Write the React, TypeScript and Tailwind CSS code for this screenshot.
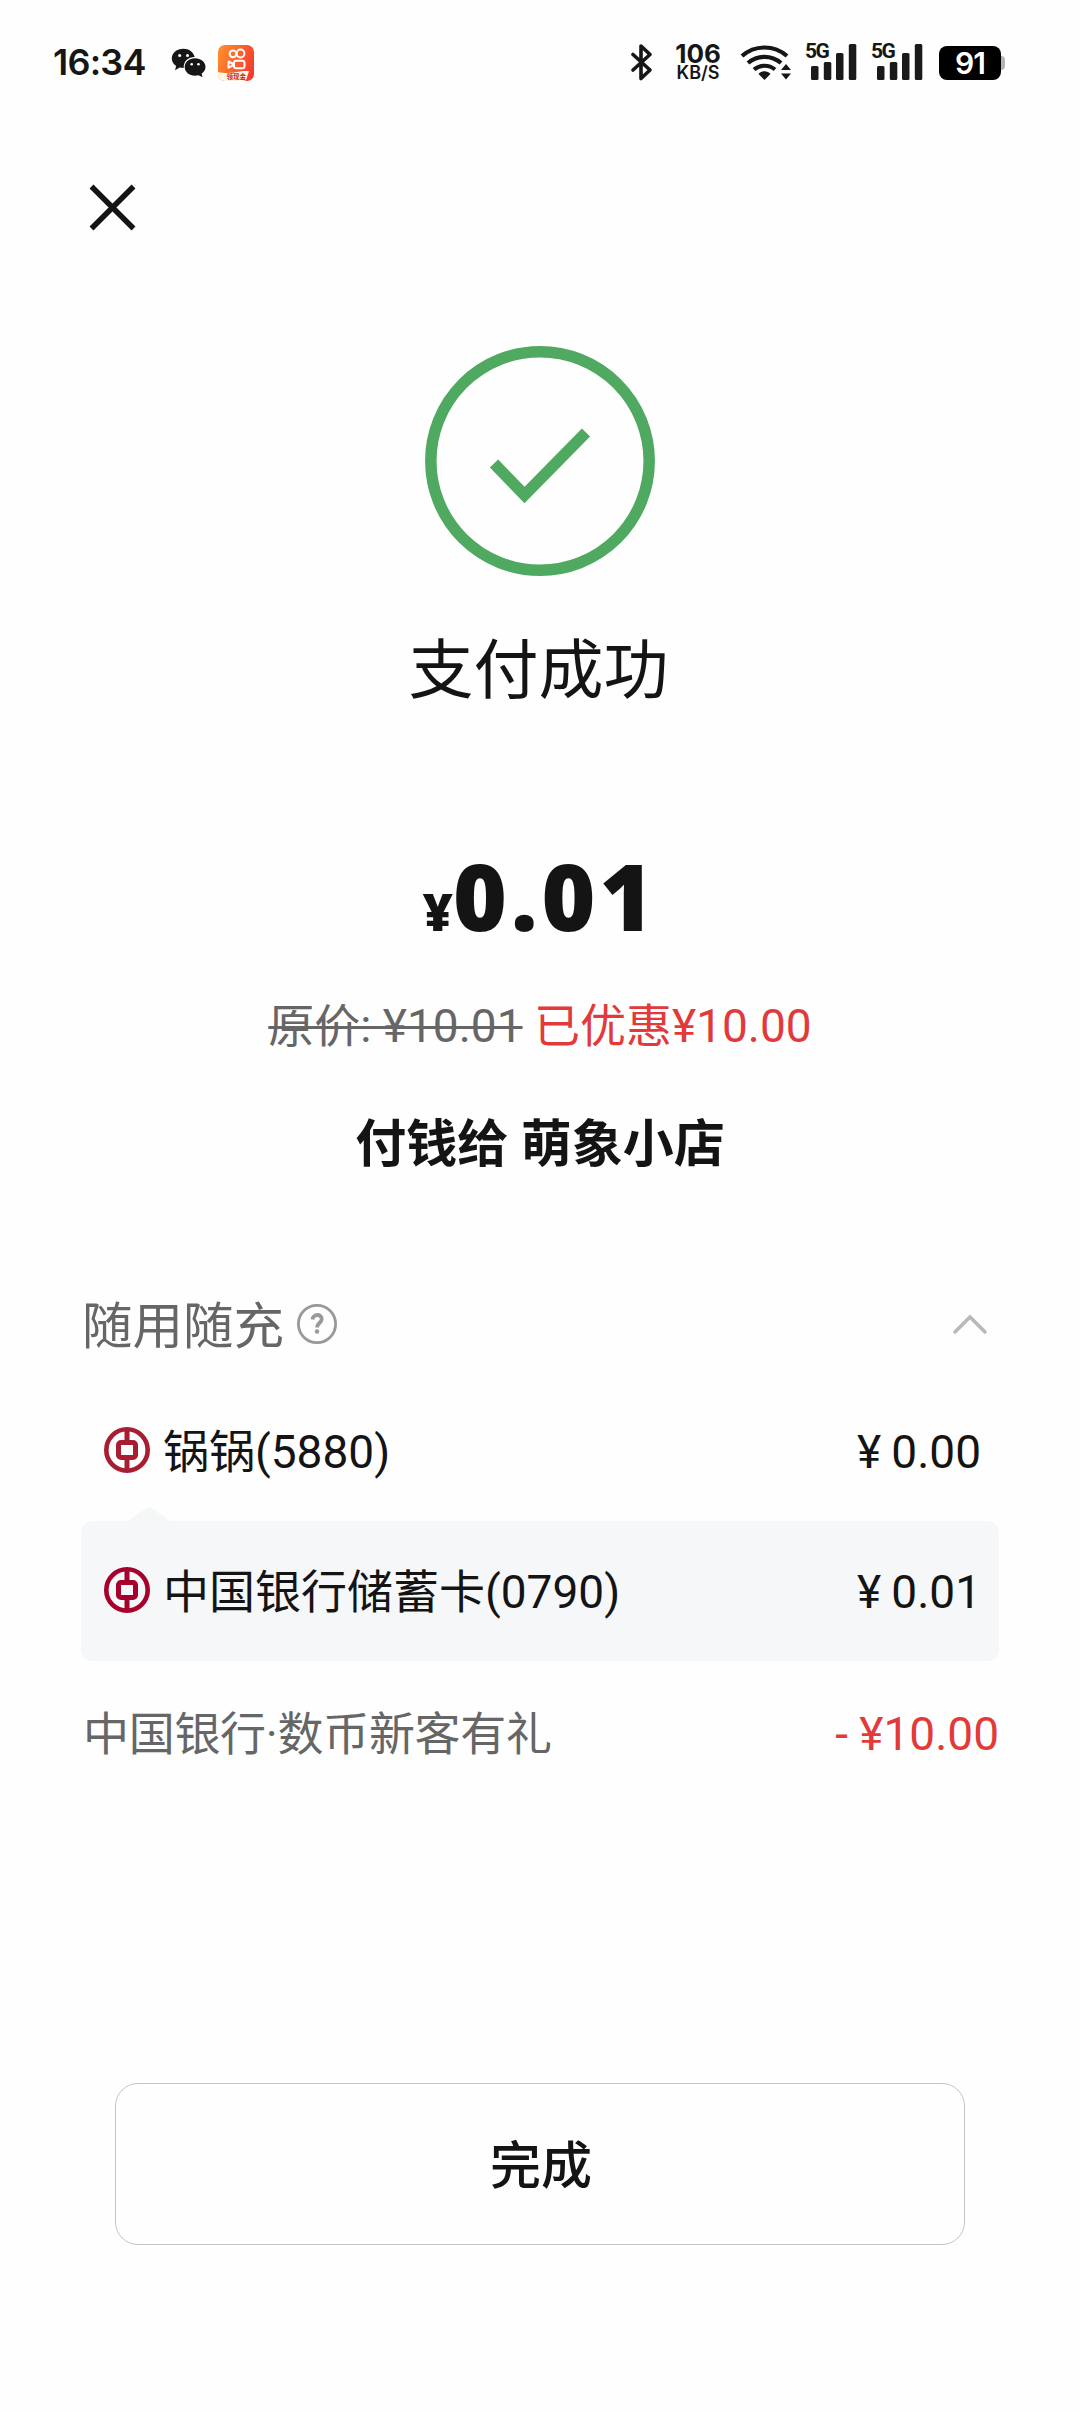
import React from 'react'

interface PaymentRow {
    name: string;
    amount: string;
    color: string;
}

const rows: PaymentRow[] = [
    { name: '锅锅(5880)', amount: '0.00', color: '#a71e32' },
    { name: '中国银行储蓄卡(0790)', amount: '0.01', color: '#a6002c' },
]

function WechatIcon() {
    return (
        <svg width="36" height="30" viewBox="0 0 36 30" fill="#161616">
            <path d="M12.5.8C5.8.8.8 5 .8 10.400c0 3.200 1.700 5.800 4.400 7.600L4 22.200l4.800-2.600c1.200.3 2.500.4 3.900.4C12.200 13.500 17.200 9.200 23.700 9.100 22.500 4.200 18 .8 12.500.8Z" />
            <path d="M24 10.300c-5.900 0-10.300 3.900-10.300 8.700s4.400 8.700 10.300 8.700c1.300 0 2.500-.2 3.600-.5l4 2-1-3.500c2.400-1.600 3.900-3.900 3.900-6.700 0-4.800-4.600-8.700-10.500-8.700Z" />
            <circle cx="8.700" cy="7.600" r="1.500" fill="#fefefe" />
            <circle cx="16.500" cy="7.600" r="1.500" fill="#fefefe" />
            <circle cx="20.700" cy="16.200" r="1.300" fill="#fefefe" />
            <circle cx="27.500" cy="16.200" r="1.300" fill="#fefefe" />
        </svg>
    )
}

function KuaishouIcon() {
    return (
        <svg width="36" height="36" viewBox="0 0 36 36">
            <defs>
                <linearGradient id="ks" x1="0" y1="0.300" x2="1" y2="0.700">
                    <stop offset="0" stopColor="#ff8a2b" />
                    <stop offset="1" stopColor="#f5392e" />
                </linearGradient>
            </defs>
            <rect width="36" height="36" rx="7" fill="url(#ks)" />
            <g fill="none" stroke="#fff" strokeWidth="2">
                <circle cx="15" cy="8.800" r="3.400" />
                <circle cx="22.500" cy="8.500" r="3.900" />
                <rect x="16" y="15.800" width="10.500" height="7.500" rx="2.200" />
                <path d="M10.500 16.500v6.200l4-2v-2.200z" strokeLinejoin="round" />
            </g>
            <path d="M0 27c6 1.500 14 1.200 20-.2 5-1.100 8-1 11-.5l-3 9c-1 .5-2 .7-3 .7H7c-4 0-7-3-7-7Z" fill="#fff6e4" />
            <text x="8.500" y="34" fontSize="6.500" fontWeight="700" fill="#c8281c" className="font-['Noto_Sans_CJK_SC',sans-serif]">领现金</text>
        </svg>
    )
}

function Signal() {
    return (
        <div className="relative h-[38px] w-[52px]">
            <span className="absolute top-0 left-0 font-['Roboto',sans-serif] text-[21px] leading-[17px] font-bold tracking-[-1.500px]">5G</span>
            <svg className="absolute top-0 left-0" width="52" height="38" viewBox="0 0 52 38" fill="#1a1a1a">
                <rect x="6" y="23" width="7.500" height="14" rx="1.500" />
                <rect x="18.800" y="19" width="7.500" height="18" rx="1.500" />
                <rect x="31" y="10" width="7.500" height="27" rx="1.500" />
                <rect x="43.800" y="1" width="7.500" height="36" rx="1.500" />
            </svg>
        </div>
    )
}

function StatusBar() {
    return (
        <header className="flex h-[124px] items-start pt-[43px] pl-[53px] text-[#161616]">
            <div className="mt-px w-[118px] font-['Inter',sans-serif] text-[36px] leading-[37px] font-semibold tracking-[-0.800px]">16:34</div>
            <div className="mt-[5px] w-[47px]"><WechatIcon /></div>
            <div className="mt-[2px] w-[413px]"><KuaishouIcon /></div>
            <svg className="mt-px" width="22" height="37" viewBox="0 0 22 37" fill="none" stroke="#161616" strokeWidth="3.600" strokeLinecap="round" strokeLinejoin="round">
                <path d="M2 10.500 19 26 10 34.500V2l9 8.500L2 26" />
            </svg>
            <div className="ml-[21px] flex w-[48px] flex-col items-center font-['Inter',sans-serif]">
                <span className="text-[26px] leading-[22px] font-bold">106</span>
                <span className="text-[18px] leading-[16px] font-semibold">KB/S</span>
            </div>
            <svg className="ml-[18px]" width="52" height="38" viewBox="0 0 52 38" fill="none" stroke="#161616" strokeWidth="4.200">
                <path d="M2 13a34 34 0 0 1 45 0" />
                <path d="M8 20a25 25 0 0 1 33 0" />
                <path d="M14 26.500a16.500 16.500 0 0 1 21 0" />
                <path d="M24.500 37 18.500 31c3-3.600 9-3.600 12 0Z" fill="#161616" stroke="none" />
                <path d="m46 21 5 6H41ZM46 36.500l5-6H41Z" fill="#161616" stroke="none" />
            </svg>
            <div className="ml-[13px]"><Signal /></div>
            <div className="ml-[14px]"><Signal /></div>
            <div className="mt-[3px] ml-[16px] flex items-center">
                <div className="h-[34px] w-[62px] rounded-[8px] bg-black text-center font-['Inter',sans-serif] text-[30px] leading-[35px] font-semibold tracking-[-1px] text-white">91</div>
                <div className="h-[14px] w-[4px] rounded-r-[4px] bg-[#b5b5b5]" />
            </div>
        </header>
    )
}

// coin shaped mark of the bank
function BankLogo({ color }: { color: string }) {
    return (
        <svg width="46" height="46" viewBox="0 0 46 46" fill="none" stroke={color}>
            <circle cx="23" cy="23" r="20.700" strokeWidth="4.600" />
            <rect x="14.500" y="15.500" width="17" height="15" rx="2.500" strokeWidth="5" />
            <path d="M23 3v12M23 31v12" strokeWidth="5" />
        </svg>
    )
}

function PaymentLine({ row }: { row: PaymentRow }) {
    return (
        <div className="flex h-[140px] items-center pr-[18px] pb-[2px] pl-[23px] text-[46px] leading-[60px] text-[#141414]">
            <BankLogo color={row.color} />
            <span className="ml-[13px] pt-[4px]">{row.name}</span>
            <span className="ml-auto flex w-[124px] pt-[4px]">
                <span className="w-[37px]">¥</span>
                <span>{row.amount}</span>
            </span>
        </div>
    )
}

export default function App() {
    return (
        <div className="flex h-[2412px] w-[1080px] flex-col overflow-hidden bg-[#fefefe] font-['Roboto','Noto_Sans_CJK_SC',sans-serif] text-[#141414]">
            <StatusBar />
            <button className="mt-[60px] ml-[89px] w-[48px]" aria-label="关闭">
                <svg width="48" height="48" viewBox="0 0 48 48" stroke="#141414" strokeWidth="5.500">
                    <path d="M2.500 2.500l42 42M44.500 2.500l-42 42" />
                </svg>
            </button>

            <section className="mt-[114px] flex flex-col items-center">
                <svg width="230" height="230" viewBox="0 0 230 230" fill="none" stroke="#50a960" strokeWidth="11.500">
                    <circle cx="115" cy="115" r="109.200" />
                    <path d="M69 117.500 99.500 149l61.500-62.500" />
                </svg>
                <h1 className="mt-[47px] mr-[3px] text-[65px] leading-[96px]">支付成功</h1>
                <div className="mt-[117px] flex h-[120px] items-baseline font-['Noto_Sans',sans-serif] leading-[120px] font-black">
                    <span className="text-[52px]">¥</span>
                    <span className="text-[92px] tracking-[4px]">0.01</span>
                </div>
                <p className="mt-[40px] text-[46px] leading-[60px]">
                    <span className="text-[#666] line-through decoration-[3px]">原价: ¥10.01</span>{' '}
                    <span className="text-[#e23a3a]">已优惠¥10.00</span>
                </p>
                <h2 className="mt-[56px] text-[51px] leading-[66px] font-bold">付钱给 萌象小店</h2>
            </section>

            <section className="mt-[114px] mr-[81px] ml-[81px]">
                <div className="flex h-[68px] items-center pl-[1px]">
                    <span className="pt-[2px] text-[50.500px] leading-[66px] text-[#666]">随用随充</span>
                    <svg className="mb-[4px] ml-[12px]" width="42" height="42" viewBox="0 0 42 42" fill="none" stroke="#999">
                        <circle cx="21" cy="21" r="18.600" strokeWidth="2.800" />
                        <path d="M16.500 16.500c.4-6 9.200-5.800 9.200-.5 0 4-4.700 4-4.700 8.500" strokeWidth="3.800" />
                        <circle cx="21" cy="28.500" r="2.200" fill="#999" stroke="none" />
                    </svg>
                    <svg className="mr-[11px] mb-[4px] ml-auto" width="36" height="22" viewBox="0 0 36 22" fill="none" stroke="#b8b8b8" strokeWidth="3.500" strokeLinecap="round">
                        <path d="M3 19 18 4l15 15" />
                    </svg>
                </div>
                <div className="mt-[21px]">
                    <PaymentLine row={rows[0]} />
                </div>
                <div className="relative rounded-[12px] bg-[#f6f7f9]">
                    <svg className="absolute -top-[14px] left-[47px]" width="42" height="14" viewBox="0 0 42 14" fill="#f5f6f7">
                        <path d="M0 14 18 1.500q3-2 6 0L42 14Z" />
                    </svg>
                    <PaymentLine row={rows[1]} />
                </div>
                <div className="mt-[43px] flex justify-between pl-[2px] text-[46px] leading-[60px]">
                    <span className="tracking-[-0.300px] text-[#666]">中国银行·数币新客有礼</span>
                    <span className="text-[#e23a3a]">- ¥10.00</span>
                </div>
            </section>

            <button className="mt-[319px] ml-[115px] h-[162px] w-[850px] rounded-[23px] border border-[#c4c4c4] pt-[7px] pl-[2px] text-[51px] font-medium">完成</button>
        </div>
    )
}
